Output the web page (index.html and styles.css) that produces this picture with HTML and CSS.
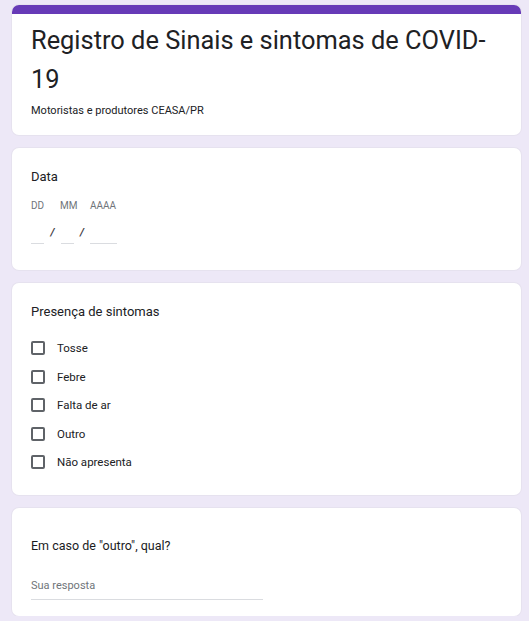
FILE: index.html
```html
<!DOCTYPE html>
<html lang="pt-BR">
<head>
<meta charset="utf-8">
<title>Registro de Sinais e sintomas de COVID-19</title>
<link rel="stylesheet" href="styles.css">
</head>
<body>
<main class="form">
  <section class="card header-card">
    <div class="header-bar"></div>
    <div class="header-body">
      <h1 class="form-title">Registro de Sinais e sintomas de COVID-19</h1>
      <p class="form-desc">Motoristas e produtores CEASA/PR</p>
    </div>
  </section>

  <section class="card question date-card">
    <div class="q-title">Data</div>
    <div class="date-grid">
      <span class="date-label">DD</span>
      <span></span>
      <span class="date-label">MM</span>
      <span></span>
      <span class="date-label">AAAA</span>
      <span class="date-field"></span>
      <span class="date-sep">/</span>
      <span class="date-field"></span>
      <span class="date-sep">/</span>
      <span class="date-field"></span>
    </div>
  </section>

  <section class="card question check-card">
    <div class="q-title">Presença de sintomas</div>
    <ul class="options">
      <li class="option"><span class="box"></span><span class="opt-label">Tosse</span></li>
      <li class="option"><span class="box"></span><span class="opt-label">Febre</span></li>
      <li class="option"><span class="box"></span><span class="opt-label">Falta de ar</span></li>
      <li class="option"><span class="box"></span><span class="opt-label">Outro</span></li>
      <li class="option"><span class="box"></span><span class="opt-label">Não apresenta</span></li>
    </ul>
  </section>

  <section class="card question text-card">
    <div class="q-title q-title-strong">Em caso de "outro", qual?</div>
    <div class="answer">Sua resposta</div>
  </section>
</main>
</body>
</html>
```
FILE: styles.css
```css
html, body {
  margin: 0;
  padding: 0;
}
body {
  background: #ede8f7;
  font-family: Roboto, "Liberation Sans", Arial, sans-serif;
  color: #202124;
}
.form {
  width: 509px;
  padding: 5px 0 0 12px;
  display: flex;
  flex-direction: column;
  gap: 13px;
}
.card {
  background: #ffffff;
  border-radius: 7px;
  box-shadow: 0 0 0 1px #e6e2ef;
}
.header-card {
  overflow: hidden;
}
.header-bar {
  height: 9px;
  background: #673ab7;
}
.header-body {
  padding: 7px 19px 16px 19px;
}
.form-title {
  margin: 0;
  font-weight: 400;
  font-size: 25.4px;
  line-height: 39px;
  color: #202124;
  width: 465px;
}
.form-desc {
  margin: 4px 0 0 0;
  font-size: 11px;
  line-height: 16px;
  color: #202124;
}
.question {
  padding: 19px 19px 0 19px;
}
.q-title {
  font-size: 13px;
  line-height: 20px;
  color: #202124;
}
.date-card {
  height: 103px;
}
.date-grid {
  margin-top: 13px;
  display: grid;
  grid-template-columns: 13px 17px 13px 16px 27px;
  grid-template-rows: 12px 22px;
  row-gap: 10px;
}
.date-label {
  font-size: 10px;
  line-height: 12px;
  color: #70757a;
  white-space: nowrap;
}
.date-grid .date-label:nth-child(3) {
  margin-left: -1px;
}
.date-field {
  border-bottom: 1px solid #dadce0;
}
.date-sep {
  font-size: 11px;
  line-height: 22px;
  font-style: italic;
  font-weight: 700;
  color: #3c4043;
  text-align: center;
}
.check-card {
  height: 193px;
}
.options {
  list-style: none;
  margin: 12px 0 0 0;
  padding: 0;
}
.option {
  height: 28.5px;
  display: flex;
  align-items: center;
  gap: 12px;
}
.box {
  width: 10px;
  height: 10px;
  border: 2px solid #5f6368;
  border-radius: 2px;
}
.opt-label {
  font-size: 11.5px;
  color: #202124;
}
.text-card {
  padding-top: 29px;
  height: 79px;
}
.q-title-strong {
  font-size: 12.5px;
  line-height: 18px;
  font-weight: 400;
  color: #1a1b1e;
}
.answer {
  margin-top: 24px;
  width: 232px;
  font-size: 11px;
  line-height: 14px;
  padding-bottom: 6px;
  color: #70757a;
  border-bottom: 1px solid #dadce0;
}
```
